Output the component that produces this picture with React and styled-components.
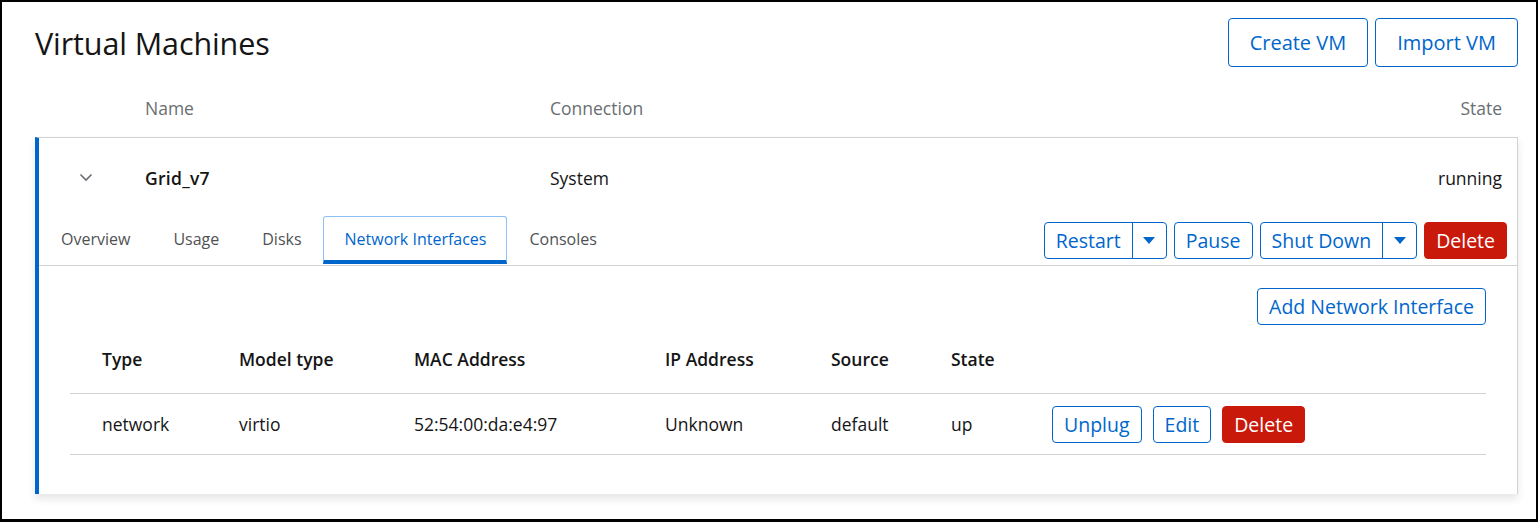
import React from 'react';
import styled, { createGlobalStyle } from 'styled-components';

const GlobalStyle = createGlobalStyle`
    html, body {
        margin: 0;
        padding: 0;
        background: #000;
    }
    body {
        font-family: 'Open Sans', 'Liberation Sans', sans-serif;
        color: #151515;
    }
`;

const Frame = styled.div`
    box-sizing: border-box;
    width: 1538px;
    height: 522px;
    border: 2px solid #000;
    border-bottom-width: 3px;
    background: #fff;
    padding: 16px 18px 0 33px;
`;

const PageHeader = styled.div`
    display: flex;
    align-items: center;
    justify-content: space-between;
    height: 49px;
`;

const Title = styled.h1`
    margin: 0;
    font-size: 30.5px;
    font-weight: 400;
    letter-spacing: -0.1px;
`;

const Toolbar = styled.div`
    display: flex;
    gap: ${(p) => p.gap || 7}px;
    align-items: center;
`;

const Button = styled.button`
    box-sizing: border-box;
    height: ${(p) => (p.large ? 49 : 37)}px;
    padding: 0 ${(p) => (p.large ? 21 : 11)}px;
    font-family: inherit;
    font-size: ${(p) => (p.large ? 20 : 19.5)}px;
    border-radius: 4px;
    border: 1px solid ${(p) => (p.danger ? '#c9190b' : '#0066cc')};
    background: ${(p) => (p.danger ? '#c9190b' : '#fff')};
    color: ${(p) => (p.danger ? '#fff' : '#0066cc')};
    cursor: pointer;
`;

const Split = styled.div`
    display: flex;
    box-sizing: border-box;
    height: 37px;
    border: 1px solid #0066cc;
    border-radius: 4px;
    color: #0066cc;
    font-size: 19.5px;
`;

const SplitMain = styled.span`
    display: flex;
    align-items: center;
    padding: 0 11px;
    border-right: 1px solid #0066cc;
`;

const SplitToggle = styled.span`
    display: flex;
    align-items: center;
    justify-content: center;
    width: 33px;
`;

const ListHead = styled.div`
    display: grid;
    grid-template-columns: 110px 405px 1fr auto;
    align-items: center;
    box-sizing: border-box;
    height: 70px;
    padding: 12px 16px 0 0;
    font-size: 17.5px;
    color: #6a6e73;
`;

const Card = styled.div`
    box-sizing: border-box;
    height: 357px;
    border-top: 1px solid #d2d2d2;
    border-right: 1px solid #d2d2d2;
    border-left: 4px solid #0066cc;
    box-shadow: 0 5px 8px rgba(3, 3, 3, 0.1);
`;

const VmRow = styled.div`
    display: grid;
    grid-template-columns: 106px 405px 1fr auto;
    align-items: center;
    box-sizing: border-box;
    height: 77px;
    padding: 2px 15px 0 0;
    font-size: 17.5px;
`;

const Toggle = styled.span`
    display: flex;
    padding-left: 40px;
    color: #6a6e73;
`;

const VmName = styled.span`
    font-weight: 600;
    letter-spacing: 0.3px;
`;

const TabBar = styled.div`
    display: flex;
    align-items: center;
    justify-content: space-between;
    height: 50px;
    border-bottom: 1px solid #d2d2d2;
    padding-right: 10px;
`;

const Tabs = styled.div`
    display: flex;
    align-self: stretch;
`;

const Tab = styled.div`
    display: flex;
    align-items: center;
    box-sizing: border-box;
    padding: 0 20px 0 21px;
    margin-top: 1px;
    font-size: 16px;
    color: ${(p) => (p.active ? '#0066cc' : '#4f5255')};
    border: 1px solid ${(p) => (p.active ? '#8bc1f7' : 'transparent')};
    border-bottom: 4px solid ${(p) => (p.active ? '#0066cc' : 'transparent')};
    border-radius: 3px 3px 0 0;
    margin-bottom: 1px;
`;

const Body = styled.div`
    padding: 22px 31px 0 31px;
`;

const AddRow = styled.div`
    display: flex;
    justify-content: flex-end;
`;

const NicGrid = styled.div`
    display: grid;
    grid-template-columns: 169px 175px 251px 166px 120px 101px 1fr;
    align-items: center;
    height: ${(p) => p.h}px;
    border-bottom: 1px solid #d2d2d2;
    font-size: 17.5px;
    font-weight: ${(p) => (p.head ? 600 : 400)};
`;

const Cell = styled.span`
    padding-left: ${(p) => (p.first ? 32 : 0)}px;
`;

const Chevron = () => (
    <svg width="14" height="9" viewBox="0 0 14 9">
        <polyline points="1.5,1.5 7,7 12.5,1.5" fill="none" stroke="#6a6e73" strokeWidth="1.6" />
    </svg>
);

const Caret = () => (
    <svg width="12" height="7" viewBox="0 0 12 7">
        <polygon points="0,0 12,0 6,7" fill="#0066cc" />
    </svg>
);

const nics = [
    { type: 'network', model: 'virtio', mac: '52:54:00:da:e4:97', ip: 'Unknown', source: 'default', state: 'up' },
];

const App = () => (
    <>
        <GlobalStyle />
        <Frame>
            <PageHeader>
                <Title>Virtual Machines</Title>
                <Toolbar gap={7}>
                    <Button large>Create VM</Button>
                    <Button large>Import VM</Button>
                </Toolbar>
            </PageHeader>

            <ListHead>
                <span />
                <span>Name</span>
                <span>Connection</span>
                <span>State</span>
            </ListHead>

            <Card>
                <VmRow>
                    <Toggle>
                        <Chevron />
                    </Toggle>
                    <VmName>Grid_v7</VmName>
                    <span>System</span>
                    <span>running</span>
                </VmRow>

                <TabBar>
                    <Tabs>
                        <Tab>Overview</Tab>
                        <Tab>Usage</Tab>
                        <Tab>Disks</Tab>
                        <Tab active>Network Interfaces</Tab>
                        <Tab>Consoles</Tab>
                    </Tabs>
                    <Toolbar>
                        <Split>
                            <SplitMain>Restart</SplitMain>
                            <SplitToggle>
                                <Caret />
                            </SplitToggle>
                        </Split>
                        <Button>Pause</Button>
                        <Split>
                            <SplitMain>Shut Down</SplitMain>
                            <SplitToggle>
                                <Caret />
                            </SplitToggle>
                        </Split>
                        <Button danger>Delete</Button>
                    </Toolbar>
                </TabBar>

                <Body>
                    <AddRow>
                        <Button>Add Network Interface</Button>
                    </AddRow>
                    <NicGrid head h={68}>
                        <Cell first>Type</Cell>
                        <Cell>Model type</Cell>
                        <Cell>MAC Address</Cell>
                        <Cell>IP Address</Cell>
                        <Cell>Source</Cell>
                        <Cell>State</Cell>
                        <span />
                    </NicGrid>
                    {nics.map((nic) => (
                        <NicGrid key={nic.mac} h={60}>
                            <Cell first>{nic.type}</Cell>
                            <Cell>{nic.model}</Cell>
                            <Cell>{nic.mac}</Cell>
                            <Cell>{nic.ip}</Cell>
                            <Cell>{nic.source}</Cell>
                            <Cell>{nic.state}</Cell>
                            <Toolbar gap={11}>
                                <Button>Unplug</Button>
                                <Button>Edit</Button>
                                <Button danger>Delete</Button>
                            </Toolbar>
                        </NicGrid>
                    ))}
                </Body>
            </Card>
        </Frame>
    </>
);

export default App;
